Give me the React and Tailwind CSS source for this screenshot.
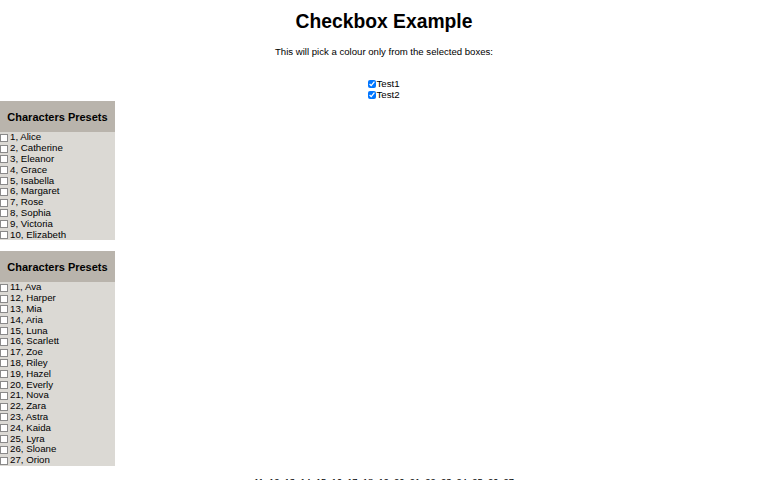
import React, { useState } from 'react';

const firstNames = ['Alice', 'Catherine', 'Eleanor', 'Grace', 'Isabella', 'Margaret', 'Rose', 'Sophia', 'Victoria', 'Elizabeth'];
const secondNames = ['Ava', 'Harper', 'Mia', 'Aria', 'Luna', 'Scarlett', 'Zoe', 'Riley', 'Hazel', 'Everly', 'Nova', 'Zara', 'Astra', 'Kaida', 'Lyra', 'Sloane', 'Orion'];

// unchecked boxes in the reference are plain squares, so draw them flat
const boxClass = 'appearance-none w-[8px] h-[8px] m-0 mr-[2px] border border-[#8a8a8a] bg-white checked:bg-[#1a73e8] checked:border-[#1a73e8] shrink-0';

const PresetPanel = ({ names, start }) => (
  <div className="w-[115px]">
    <div className="h-[31px] bg-[#b9b4ac] flex items-center justify-center text-[11px] font-bold text-black">
      Characters Presets
    </div>
    <div className="bg-[#dbd9d4]">
      {names.map((name, i) => (
        <label key={name} className="flex items-center h-[10.8px] text-[9.7px] leading-[10.8px] text-black">
          <input type="checkbox" className={boxClass} />
          {start + i}, {name}
        </label>
      ))}
    </div>
  </div>
);

const App = () => {
  const [tests, setTests] = useState({ t1: true, t2: true });

  return (
    <div className="w-[768px] h-[480px] overflow-hidden bg-white font-['Liberation_Sans',Arial,sans-serif] text-black">
      <h1 className="mt-[11px] text-center text-[19.3px] leading-[22px] font-bold">Checkbox Example</h1>
      <p className="mt-[14px] text-center text-[9.6px] leading-[10.8px]">This will pick a colour only from the selected boxes:</p>

      <div className="mt-[21px] flex flex-col items-center text-[9.7px] leading-[10.8px]">
        <label className="flex items-center h-[10.8px]">
          <input type="checkbox" checked={tests.t1} onChange={() => setTests({ ...tests, t1: !tests.t1 })} className="w-[8px] h-[8px] m-0" />
          Test1
        </label>
        <label className="flex items-center h-[10.8px]">
          <input type="checkbox" checked={tests.t2} onChange={() => setTests({ ...tests, t2: !tests.t2 })} className="w-[8px] h-[8px] m-0" />
          Test2
        </label>
      </div>

      <div className="mt-[1px] flex flex-col gap-[11px]">
        <PresetPanel names={firstNames} start={1} />
        <PresetPanel names={secondNames} start={11} />
      </div>

      <p className="mt-[11px] text-center text-[9.4px] leading-[10.8px]">
        11, 12, 13, 14, 15, 16, 17, 18, 19, 20, 21, 22, 23, 24, 25, 26, 27
      </p>
    </div>
  );
};

export default App;
